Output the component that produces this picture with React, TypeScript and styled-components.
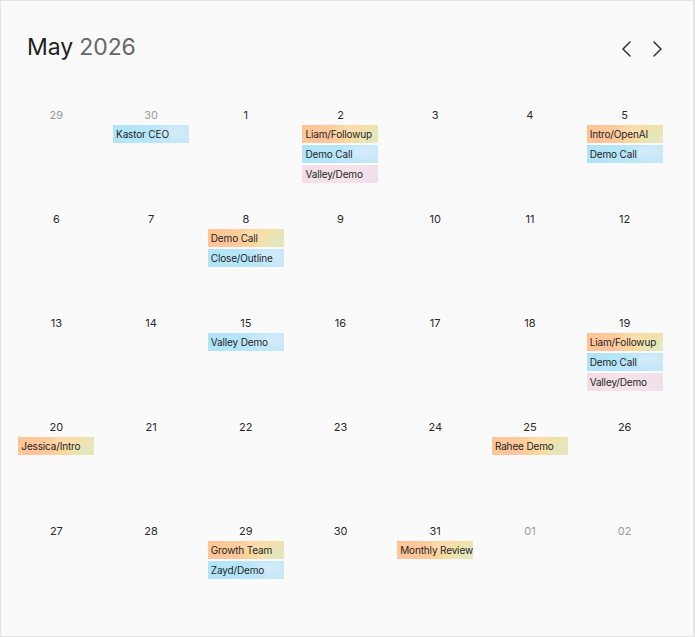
import React from "react";
import styled, { createGlobalStyle, css } from "styled-components";

const Global = createGlobalStyle`
  html, body { margin: 0; padding: 0; background: #ffffff; }
  body { font-family: Inter, "Noto Sans", sans-serif; -webkit-font-smoothing: antialiased; }
  * { box-sizing: border-box; }
`;

const Card = styled.div`
  width: 695px;
  height: 637px;
  border: 1px solid #e4e4e4;
  border-right-width: 2px;
  background: #fafafa;
  display: flex;
  flex-direction: column;
`;

const Header = styled.div`
  height: 101px;
  display: flex;
  align-items: flex-start;
  justify-content: space-between;
  padding: 31px 26px 0 26px;
`;

const Title = styled.h1`
  margin: 0;
  font-size: 23px;
  line-height: 30px;
  font-weight: 400;
  color: #1e1e1e;
  letter-spacing: -0.1px;
`;

const Year = styled.span`
  color: #666666;
`;

const Nav = styled.div`
  display: flex;
  gap: 12px;
  margin-top: 7px;
  margin-right: 0px;
`;

const NavButton = styled.button`
  width: 19px;
  height: 19px;
  border: 0;
  padding: 0;
  background: transparent;
  display: flex;
  align-items: center;
  justify-content: center;
  color: #333;
  cursor: pointer;
`;

const Grid = styled.div`
  margin-left: 8px;
  width: 663px;
  display: grid;
  grid-template-columns: repeat(7, 1fr);
  grid-auto-rows: 104px;
`;

const Cell = styled.div`
  display: flex;
  flex-direction: column;
  align-items: center;
  padding-top: 6px;
`;

const DayNum = styled.div<{ $muted?: boolean }>`
  font-size: 11px;
  line-height: 14px;
  height: 14px;
  color: ${(p) => (p.$muted ? "#9a9a9a" : "#2a2a2a")};
  margin-bottom: 3px;
`;

const Events = styled.div`
  display: flex;
  flex-direction: column;
  gap: 2px;
  width: 76px;
`;

type Tone = "orange" | "blue" | "pink";

const tones = {
  orange: css`
    background:
      radial-gradient(ellipse 35% 70% at 25% 85%, rgba(255, 190, 160, 0.6), transparent 70%),
      radial-gradient(ellipse 30% 60% at 60% 30%, rgba(255, 225, 190, 0.7), transparent 70%),
      radial-gradient(ellipse 40% 80% at 88% 70%, rgba(226, 232, 190, 0.95), transparent 70%),
      linear-gradient(100deg, #fec496 0%, #fdcc9c 40%, #f9dc9f 70%, #e9e5b9 100%);
  `,
  blue: css`
    background:
      radial-gradient(ellipse 40% 70% at 80% 40%, rgba(218, 236, 250, 0.9), transparent 70%),
      linear-gradient(100deg, #b0e4f9 0%, #b8e6f9 50%, #c8e8f8 100%);
  `,
  pink: css`
    background: linear-gradient(100deg, #f3dde6 0%, #f5e3ea 60%, #f0e0ea 100%);
  `,
};

const Chip = styled.div<{ $tone: Tone }>`
  height: 18px;
  padding: 0 3px;
  font-size: 10px;
  line-height: 18px;
  letter-spacing: -0.15px;
  color: #1f1f1f;
  white-space: nowrap;
  overflow: hidden;
  ${(p) => tones[p.$tone]}
`;

type Ev = { t: string; tone: Tone };
type Day = { n: string; muted?: boolean; ev?: Ev[] };

const o = (t: string): Ev => ({ t, tone: "orange" });
const b = (t: string): Ev => ({ t, tone: "blue" });
const p = (t: string): Ev => ({ t, tone: "pink" });

const days: Day[] = [
  { n: "29", muted: true },
  { n: "30", muted: true, ev: [b("Kastor CEO")] },
  { n: "1" },
  { n: "2", ev: [o("Liam/Followup"), b("Demo Call"), p("Valley/Demo")] },
  { n: "3" },
  { n: "4" },
  { n: "5", ev: [o("Intro/OpenAI"), b("Demo Call")] },
  { n: "6" },
  { n: "7" },
  { n: "8", ev: [o("Demo Call"), b("Close/Outline")] },
  { n: "9" },
  { n: "10" },
  { n: "11" },
  { n: "12" },
  { n: "13" },
  { n: "14" },
  { n: "15", ev: [b("Valley Demo")] },
  { n: "16" },
  { n: "17" },
  { n: "18" },
  { n: "19", ev: [o("Liam/Followup"), b("Demo Call"), p("Valley/Demo")] },
  { n: "20", ev: [o("Jessica/Intro")] },
  { n: "21" },
  { n: "22" },
  { n: "23" },
  { n: "24" },
  { n: "25", ev: [o("Rahee Demo")] },
  { n: "26" },
  { n: "27" },
  { n: "28" },
  { n: "29", ev: [o("Growth Team"), b("Zayd/Demo")] },
  { n: "30" },
  { n: "31", ev: [o("Monthly Review")] },
  { n: "01", muted: true },
  { n: "02", muted: true },
];

const Chevron = ({ dir }: { dir: "left" | "right" }) => (
  <svg width="11" height="16" viewBox="0 0 11 16" fill="none">
    <path
      d={dir === "left" ? "M9 1 L2 8 L9 15" : "M2 1 L9 8 L2 15"}
      stroke="currentColor"
      strokeWidth="1.5"
      strokeLinecap="round"
      strokeLinejoin="round"
    />
  </svg>
);

export default function App() {
  return (
    <>
      <Global />
      <Card>
        <Header>
          <Title>
            May <Year>2026</Year>
          </Title>
          <Nav>
            <NavButton aria-label="Previous month">
              <Chevron dir="left" />
            </NavButton>
            <NavButton aria-label="Next month">
              <Chevron dir="right" />
            </NavButton>
          </Nav>
        </Header>
        <Grid>
          {days.map((d, i) => (
            <Cell key={i}>
              <DayNum $muted={d.muted}>{d.n}</DayNum>
              {d.ev && (
                <Events>
                  {d.ev.map((e, j) => (
                    <Chip key={j} $tone={e.tone}>
                      {e.t}
                    </Chip>
                  ))}
                </Events>
              )}
            </Cell>
          ))}
        </Grid>
      </Card>
    </>
  );
}
